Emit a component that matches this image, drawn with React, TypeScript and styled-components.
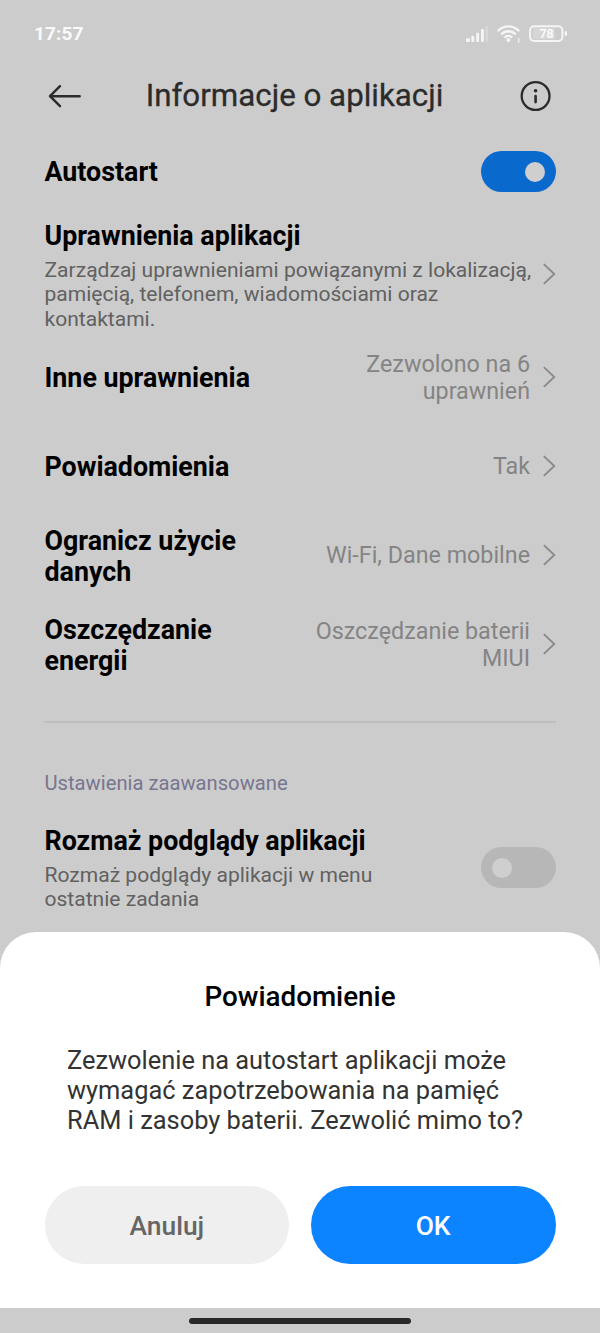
import React from "react";
import styled, { createGlobalStyle } from "styled-components";

const GlobalStyle = createGlobalStyle`
  * { box-sizing: border-box; }
  body { margin: 0; background: #cccccc; font-family: Roboto, "Noto Sans", sans-serif; }
  h1, h2, h3, p { margin: 0; }
`;

const Screen = styled.div`
  position: relative;
  width: 600px;
  height: 1333px;
  overflow: hidden;
  background: #cccccc;
`;

const StatusBar = styled.div`
  display: flex;
  align-items: center;
  justify-content: space-between;
  height: 66px;
  padding: 1px 32px 0 34px;
`;

const Clock = styled.span`
  color: #fafafa;
  font-size: 19px;
  font-weight: 700;
  letter-spacing: 0.1px;
  line-height: 22px;
  padding-top: 1px;
`;

const Header = styled.header`
  display: flex;
  align-items: center;
  justify-content: space-between;
  height: 61px;
  padding: 0 48px 2px;
`;

const HeaderTitle = styled.h1`
  margin-right: 11px;
  color: #2b2b2b;
  font-size: 31.3px;
  font-weight: 400;
  line-height: 40px;
  white-space: nowrap;
  -webkit-text-stroke: 0.3px #2b2b2b;
`;

const Row = styled.div<{ $height: number }>`
  display: flex;
  align-items: center;
  height: ${(p) => p.$height}px;
  padding: 0 44px 1px 44.5px;
`;

const RowText = styled.div`
  flex: 1;
  min-width: 0;
`;

const RowTitle = styled.h2`
  padding-top: 4px;
  color: #000;
  font-size: 26.8px;
  font-weight: 700;
  line-height: 31.5px;
  white-space: pre;
`;

const Description = styled.p`
  margin-top: 5px;
  color: #616161;
  font-size: 21.05px;
  line-height: 24.5px;
  white-space: pre;
`;

const Value = styled.span`
  margin-top: 1px;
  color: #848484;
  font-size: 23.3px;
  line-height: 27px;
  text-align: right;
  white-space: pre;
`;

const Chevron = styled.svg`
  flex: none;
  width: 14px;
  height: 24px;
  margin-left: 12px;
`;

const Toggle = styled.div<{ $on?: boolean }>`
  display: flex;
  align-items: center;
  justify-content: ${(p) => (p.$on ? "flex-end" : "flex-start")};
  width: 75px;
  height: 41px;
  margin-top: 1px;
  padding: 0 11px;
  border-radius: 21px;
  background: ${(p) => (p.$on ? "#0a69cd" : "#b7b7b7")};
`;

const Knob = styled.div`
  width: 20px;
  height: 20px;
  border-radius: 50%;
  background: #cfcfcf;
`;

const Divider = styled.div`
  height: 2px;
  margin: 32px 44px 0;
  background: #bebebe;
`;

const SectionLabel = styled.h3`
  margin: 47px 44px 0 44.5px;
  color: #777690;
  font-size: 20.2px;
  font-weight: 400;
  line-height: 26px;
`;

const Sheet = styled.section`
  position: absolute;
  left: 0;
  right: 0;
  bottom: 0;
  display: flex;
  flex-direction: column;
  height: 401px;
  padding-top: 48px;
  border-radius: 36px 36px 0 0;
  background: #fff;
`;

const SheetTitle = styled.h2`
  color: #000;
  font-size: 27.8px;
  font-weight: 500;
  line-height: 34px;
  text-align: center;
`;

const SheetText = styled.p`
  margin: 31px 67px 0;
  color: #333;
  font-size: 25.4px;
  line-height: 30px;
  white-space: pre;
`;

const Actions = styled.div`
  display: flex;
  gap: 21.5px;
  margin: 51px 44.5px 0;
`;

const Button = styled.button<{ $primary?: boolean }>`
  flex: 1;
  height: 78px;
  padding: 1px 0 0;
  border: 0;
  border-radius: 39px;
  background: ${(p) => (p.$primary ? "#0d84ff" : "#efefef")};
  color: ${(p) => (p.$primary ? "#fff" : "#666")};
  font-family: inherit;
  font-size: 26.4px;
  font-weight: 500;
`;

const NavBar = styled.div`
  display: flex;
  justify-content: center;
  height: 25px;
  margin-top: auto;
  padding-top: 10px;
  background: #cccccc;
`;

const HomeHandle = styled.div`
  width: 222px;
  height: 6px;
  border-radius: 3px;
  background: #292929;
`;

const StatusIcons = () => (
  <svg width="102" height="20" viewBox="0 0 102 20" fill="none">
    <g fill="#f5f5f5">
      <rect x="0" y="14.3" width="4" height="3.7" rx="1" />
      <rect x="5.4" y="11.7" width="2.8" height="6.3" rx="1" />
      <rect x="10.2" y="8.8" width="2.9" height="9.2" rx="1" />
      <rect x="15" y="5" width="2.9" height="13" rx="1" />
      <rect x="19.5" y="2" width="2.4" height="16" rx="1" fill="#dadada" />
      <circle cx="42.4" cy="16.1" r="2" />
      <rect x="52.2" y="14" width="1.2" height="5" />
      <rect x="98.6" y="7" width="2.4" height="5" rx="1" />
    </g>
    <g stroke="#f5f5f5" strokeWidth="2.3">
      <path d="M31.6 7.1C38.1.9 46.7.9 53.2 7.1" />
      <path d="M35.1 10.4C39.5 6.2 45.3 6.2 49.7 10.4" />
      <path d="M38.5 13.6C40.8 11.3 44 11.3 46.3 13.6" />
      <rect x="64.1" y="2.3" width="32.3" height="14.6" rx="4" strokeWidth="2" />
    </g>
    <path d="M67 4h22v11.2H67z" fill="#d6d6d6" />
    <text x="80.6" y="14" fill="#fafafa" fontFamily="Roboto, sans-serif" fontSize="12.5" fontWeight="700" textAnchor="middle">78</text>
  </svg>
);

const BackIcon = () => (
  <svg width="34" height="26" viewBox="0 0 34 26" fill="none" stroke="#2b2b2b" strokeWidth="2.4" strokeLinecap="round" strokeLinejoin="round">
    <path d="M31.7 13.2H2M12 3.2 2 13.2l10 10" />
  </svg>
);

const InfoIcon = () => (
  <svg width="34" height="34" viewBox="0 0 34 34" fill="none">
    <circle cx="17.6" cy="17" r="13.9" stroke="#2b2b2b" strokeWidth="2.3" />
    <circle cx="17.6" cy="11.8" r="1.8" fill="#2b2b2b" />
    <path d="M17.6 17.1v6" stroke="#2b2b2b" strokeWidth="2.6" strokeLinecap="round" />
  </svg>
);

const ChevronIcon = () => (
  <Chevron viewBox="0 0 14 24" fill="none">
    <path d="M1.8 2.2 12.3 12 1.8 21.8" stroke="#898989" strokeWidth="1.8" />
  </Chevron>
);

const links = [
  { title: "Inne uprawnienia", value: "Zezwolono na 6\nuprawnień" },
  { title: "Powiadomienia", value: "Tak" },
  { title: "Ogranicz użycie\ndanych", value: "Wi-Fi, Dane mobilne" },
  { title: "Oszczędzanie\nenergii", value: "Oszczędzanie baterii\nMIUI" },
];

export default function App() {
  return (
    <Screen>
      <GlobalStyle />
      <StatusBar>
        <Clock>17:57</Clock>
        <StatusIcons />
      </StatusBar>
      <Header>
        <BackIcon />
        <HeaderTitle>Informacje o aplikacji</HeaderTitle>
        <InfoIcon />
      </Header>
      <Row $height={89}>
        <RowText>
          <RowTitle>Autostart</RowTitle>
        </RowText>
        <Toggle $on>
          <Knob />
        </Toggle>
      </Row>
      <Row $height={117}>
        <RowText>
          <RowTitle>Uprawnienia aplikacji</RowTitle>
          <Description>
            {"Zarządzaj uprawnieniami powiązanymi z lokalizacją,\npamięcią, telefonem, wiadomościami oraz\nkontaktami."}
          </Description>
        </RowText>
        <ChevronIcon />
      </Row>
      {links.map((link) => (
        <Row $height={89} key={link.title}>
          <RowText>
            <RowTitle>{link.title}</RowTitle>
          </RowText>
          <Value>{link.value}</Value>
          <ChevronIcon />
        </Row>
      ))}
      <Divider />
      <SectionLabel>Ustawienia zaawansowane</SectionLabel>
      <Row $height={143}>
        <RowText>
          <RowTitle>Rozmaż podglądy aplikacji</RowTitle>
          <Description>{"Rozmaż podglądy aplikacji w menu\nostatnie zadania"}</Description>
        </RowText>
        <Toggle>
          <Knob />
        </Toggle>
      </Row>
      <Sheet>
        <SheetTitle>Powiadomienie</SheetTitle>
        <SheetText>
          {"Zezwolenie na autostart aplikacji może\nwymagać zapotrzebowania na pamięć\nRAM i zasoby baterii. Zezwolić mimo to?"}
        </SheetText>
        <Actions>
          <Button>Anuluj</Button>
          <Button $primary>OK</Button>
        </Actions>
        <NavBar>
          <HomeHandle />
        </NavBar>
      </Sheet>
    </Screen>
  );
}
